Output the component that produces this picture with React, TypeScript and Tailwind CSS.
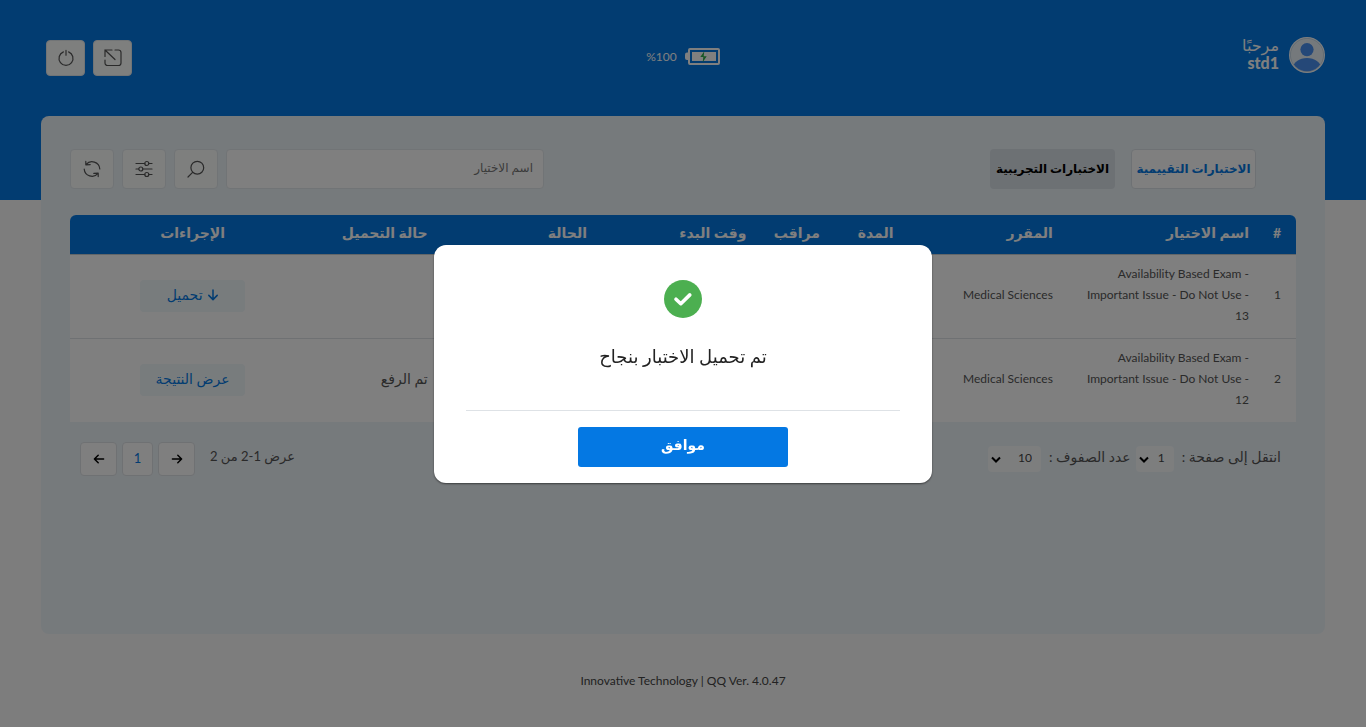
import type { ReactNode } from "react";
import clsx from "clsx";

interface Exam {
  id: number;
  name: string;
  course: string;
  uploadState: string;
  action: string;
  download?: boolean;
}

const exams: Exam[] = [
  {
    id: 1,
    name: "Availability Based Exam -\nImportant Issue - Do Not Use -\n13",
    course: "Medical Sciences",
    uploadState: "",
    action: "تحميل",
    download: true,
  },
  {
    id: 2,
    name: "Availability Based Exam -\nImportant Issue - Do Not Use -\n12",
    course: "Medical Sciences",
    uploadState: "تم الرفع",
    action: "عرض النتيجة",
  },
];

const columns = [
  { label: "#", className: "w-8 pr-[15px]" },
  { label: "اسم الاختيار", className: "w-[16%] px-[15px]" },
  { label: "المقرر", className: "w-[13%] px-[15px]" },
  { label: "المدة", className: "w-[6%] px-[15px]" },
  { label: "مراقب", className: "w-[6%] px-[15px]" },
  { label: "وقت البدء", className: "w-[13%] px-[15px]" },
  { label: "الحالة", className: "w-[13%] px-[15px]" },
  { label: "حالة التحميل", className: "px-[15px]" },
  { label: "الإجراءات", className: "w-[20%] px-[15px] text-center" },
];

function Icon({ children }: { children: ReactNode }) {
  return (
    <svg
      width="18"
      height="18"
      viewBox="0 0 18 18"
      fill="none"
      stroke="currentColor"
      strokeWidth="1.2"
      strokeLinecap="round"
      strokeLinejoin="round"
      aria-hidden="true"
    >
      {children}
    </svg>
  );
}

function IconButton({
  label,
  className,
  children,
}: {
  label: string;
  className?: string;
  children: ReactNode;
}) {
  return (
    <button
      type="button"
      aria-label={label}
      className={clsx(
        "flex shrink-0 items-center justify-center rounded border border-[#e3e8ec] bg-[#fcfefd] text-[#555]",
        className
      )}
    >
      {children}
    </button>
  );
}

function Arrow({ direction }: { direction: "left" | "right" | "down" }) {
  return (
    <svg
      width="12"
      height="12"
      viewBox="0 0 12 12"
      fill="none"
      stroke="currentColor"
      strokeWidth="1.5"
      strokeLinecap="round"
      strokeLinejoin="round"
      aria-hidden="true"
    >
      {direction === "left" && <path d="M10.6 6H1.4M5.2 2.2 1.4 6l3.8 3.8" />}
      {direction === "right" && <path d="M1.4 6h9.2M6.8 2.2 10.6 6 6.8 9.8" />}
      {direction === "down" && <path d="M6 1v9.6M1.8 6.4 6 10.6l4.2-4.2" />}
    </svg>
  );
}

function Header() {
  return (
    <header className="h-[200px] bg-[#0478e3] px-[41px] pt-[37px] text-white">
      <div className="grid grid-cols-3 items-start">
        <div className="flex items-center gap-2.5">
          <svg width="36" height="36" viewBox="0 0 36 36" aria-hidden="true">
            <defs>
              <clipPath id="avatar">
                <circle cx="18" cy="18" r="16.2" />
              </clipPath>
            </defs>
            <circle cx="18" cy="18" r="18" fill="#fff" />
            <circle cx="18" cy="18" r="16.6" fill="#eaf3f8" stroke="#a9c4d8" strokeWidth="0.6" />
            <g clipPath="url(#avatar)" fill="#4a90f0">
              <circle cx="18" cy="12.6" r="6.6" />
              <ellipse cx="18" cy="31" rx="14" ry="10" />
            </g>
          </svg>
          <div className="flex flex-col">
            <span className="text-base leading-4">مرحبًا</span>
            <span className="text-base leading-5 font-black">std1</span>
          </div>
        </div>
        <div className="flex h-10 items-center justify-center gap-2">
          <svg width="35" height="18" viewBox="0 0 35 18" aria-hidden="true">
            <path d="M3.5 4.5H2a2 2 0 0 0-2 2v3.5a2 2 0 0 0 2 2h1.5z" fill="#fff" />
            <rect x="4" y="1" width="30" height="15" rx="1" fill="none" stroke="#fff" strokeWidth="2" />
            <rect x="7" y="4" width="24" height="9" fill="#fff" />
            <path d="M19.3 3.2 15.3 9h3l-.6 5.2 4-6h-3z" fill="#2fae4d" />
          </svg>
          <span dir="ltr" className="text-xs">%100</span>
        </div>
        <div className="flex justify-end gap-2 pt-[3px] pl-[5px]">
          <IconButton label="تكبير الشاشة" className="h-9 w-[39px]">
            <Icon>
              <path d="M11 1h3.5A2.5 2.5 0 0 1 17 3.5v10.5a2.5 2.5 0 0 1-2.5 2.5h-11A2.5 2.5 0 0 1 1 14V11M1 7.5V1h7M1 1l10 9.5" />
            </Icon>
          </IconButton>
          <IconButton label="تسجيل الخروج" className="h-9 w-[39px]">
            <Icon>
              <path d="M9 1.4v4.8M6.4 2.9a7 7 0 1 0 5.2 0" />
            </Icon>
          </IconButton>
        </div>
      </div>
    </header>
  );
}

function Toolbar() {
  return (
    <div className="flex items-center justify-between">
      <div className="flex gap-4 pr-10">
        <button
          type="button"
          className="h-10 w-[125px] rounded border border-[#dde3e8] bg-white text-xs font-bold whitespace-nowrap text-[#0478e3]"
        >
          الاختبارات التقييمية
        </button>
        <button
          type="button"
          className="h-10 w-[125px] rounded bg-[#dbe2e8] text-xs font-bold whitespace-nowrap text-black"
        >
          الاختبارات التجريبية
        </button>
      </div>
      <div className="flex gap-2">
        <input
          type="text"
          aria-label="اسم الاختيار"
          placeholder="اسم الاختيار"
          className="h-10 w-[318px] rounded border border-[#e3e8ec] bg-white px-2.5 pb-1 text-xs placeholder:text-[#777]"
        />
        <IconButton label="بحث" className="h-10 w-11">
          <Icon>
            <circle cx="10.3" cy="7.7" r="6.4" />
            <path d="M5.6 12.4 1 17" />
          </Icon>
        </IconButton>
        <IconButton label="تصفية" className="h-10 w-11">
          <Icon>
            <path d="M1 3.5h8.8M13.8 3.5H17M1 9h2.8M7.8 9H17M1 14.5h8.8M13.8 14.5H17" />
            <circle cx="11.8" cy="3.5" r="2" />
            <circle cx="5.8" cy="9" r="2" />
            <circle cx="11.8" cy="14.5" r="2" />
          </Icon>
        </IconButton>
        <IconButton label="تحديث" className="h-10 w-11">
          <Icon>
            <path d="M16.8 9A7.8 7.8 0 0 0 3 4.6M2.8 1.4v3.4l4.4-.2M1.2 9A7.8 7.8 0 0 0 15 13.4M15.2 16.6v-3.4l-4.4.2" />
          </Icon>
        </IconButton>
      </div>
    </div>
  );
}

function ExamTable() {
  return (
    <div className="mt-[26px] overflow-hidden rounded-t-md bg-white">
      <table className="w-full table-fixed border-collapse text-right text-xs text-[#555]">
        <thead>
          <tr className="h-[39px] border-b border-[#c5ccd3] bg-[#0478e3] text-sm text-white">
            {columns.map((column) => (
              <th key={column.label} className={clsx("pb-0.5 font-bold whitespace-nowrap", column.className)}>
                {column.label}
              </th>
            ))}
          </tr>
        </thead>
        <tbody>
          {exams.map((exam) => (
            <tr key={exam.id} className="border-b border-[#dee2e6] leading-[21px] last:border-b-0">
              <td className="pt-2 pr-[15px] pb-3">{exam.id}</td>
              <td dir="ltr" className="px-[15px] pt-2 pb-3 text-right whitespace-pre">{exam.name}</td>
              <td className="px-[15px] pt-2 pb-3 whitespace-nowrap">{exam.course}</td>
              <td />
              <td />
              <td />
              <td />
              <td className="px-[15px] pt-2 pb-3 text-sm leading-[21px]">{exam.uploadState}</td>
              <td>
                <button
                  type="button"
                  className="mx-auto flex h-8 w-[105px] items-center justify-center gap-1 rounded bg-[#f0f8fa] pb-0.5 text-sm whitespace-nowrap text-[#0478e3]"
                >
                  {exam.download && <Arrow direction="down" />}
                  {exam.action}
                </button>
              </td>
            </tr>
          ))}
        </tbody>
      </table>
    </div>
  );
}

function PageSelect({ label, value, className }: { label: string; value: string; className: string }) {
  return (
    <label className="flex items-center gap-2">
      <span className="pb-1">{label}</span>
      <span className="relative flex">
        <select
          defaultValue={value}
          className={clsx("h-[26px] appearance-none rounded bg-[#fafcfd] pr-[9px] pb-0.5 text-xs text-[#444]", className)}
        >
          <option>{value}</option>
        </select>
        <svg
          className="pointer-events-none absolute top-[10px] left-[3px]"
          width="10"
          height="8"
          viewBox="0 0 10 8"
          fill="none"
          stroke="#000"
          strokeWidth="2"
          aria-hidden="true"
        >
          <path d="m1 1.5 4 4 4-4" />
        </svg>
      </span>
    </label>
  );
}

function Pagination() {
  return (
    <div className="mt-5 flex items-center justify-between pr-[15px] pl-2.5 text-[#555]">
      <div className="flex items-center gap-[5px] text-sm">
        <PageSelect label="انتقل إلى صفحة :" value="1" className="w-[38px]" />
        <PageSelect label="عدد الصفوف :" value="10" className="w-[53px]" />
      </div>
      <nav className="flex items-center gap-[5px] text-[13px]">
        <span className="pb-1 pl-2.5">عرض 1-2 من 2</span>
        <button
          type="button"
          aria-label="السابق"
          className="flex h-[34px] w-[37px] items-center justify-center rounded border border-[#dee2e6] bg-white text-black"
        >
          <Arrow direction="right" />
        </button>
        <button
          type="button"
          className="flex h-[34px] w-[31px] items-center justify-center rounded border border-[#dee2e6] bg-white text-[#0478e3]"
        >
          1
        </button>
        <button
          type="button"
          aria-label="التالي"
          className="flex h-[34px] w-[37px] items-center justify-center rounded border border-[#dee2e6] bg-white text-black"
        >
          <Arrow direction="left" />
        </button>
      </nav>
    </div>
  );
}

function SuccessDialog() {
  return (
    <div className="fixed inset-0 flex items-center justify-center bg-black/50">
      <div
        role="dialog"
        aria-modal="true"
        aria-labelledby="dialog-message"
        className="w-[498px] max-w-full rounded-xl bg-white px-8 pb-4 shadow-[0_1px_2px_rgba(0,0,0,0.5)]"
      >
        <div className="flex flex-col items-center border-b border-[#dee2e6] pt-[35px] pb-[42px]">
          <svg width="38" height="38" viewBox="0 0 38 38" aria-hidden="true">
            <circle cx="19" cy="19" r="19" fill="#4caf50" />
            <path
              d="m12 19.2 4.8 4.5 9-8.8"
              fill="none"
              stroke="#fff"
              strokeWidth="3.6"
              strokeLinecap="round"
              strokeLinejoin="round"
            />
          </svg>
          <p id="dialog-message" className="mt-[26px] text-lg leading-6 text-[#222]">
            تم تحميل الاختبار بنجاح
          </p>
        </div>
        <button
          type="button"
          className="mx-auto mt-4 block h-10 w-[210px] rounded-[3px] bg-[#0478e3] pb-1 text-sm font-bold text-white"
        >
          موافق
        </button>
      </div>
    </div>
  );
}

export default function App() {
  return (
    <div
      dir="rtl"
      className="flex min-h-screen flex-col bg-[#fafafa] font-['Lato','DejaVu_Sans',sans-serif]"
    >
      <Header />
      <main className="mx-[41px] -mt-[84px] flex-1 rounded-lg bg-[#edf4f9] px-[29px] pt-[33px] pb-8">
        <Toolbar />
        <ExamTable />
        <Pagination />
      </main>
      <footer dir="ltr" className="flex h-[93px] items-center justify-center text-xs text-[#444]">
        Innovative Technology | QQ Ver. 4.0.47
      </footer>
      <SuccessDialog />
    </div>
  );
}
